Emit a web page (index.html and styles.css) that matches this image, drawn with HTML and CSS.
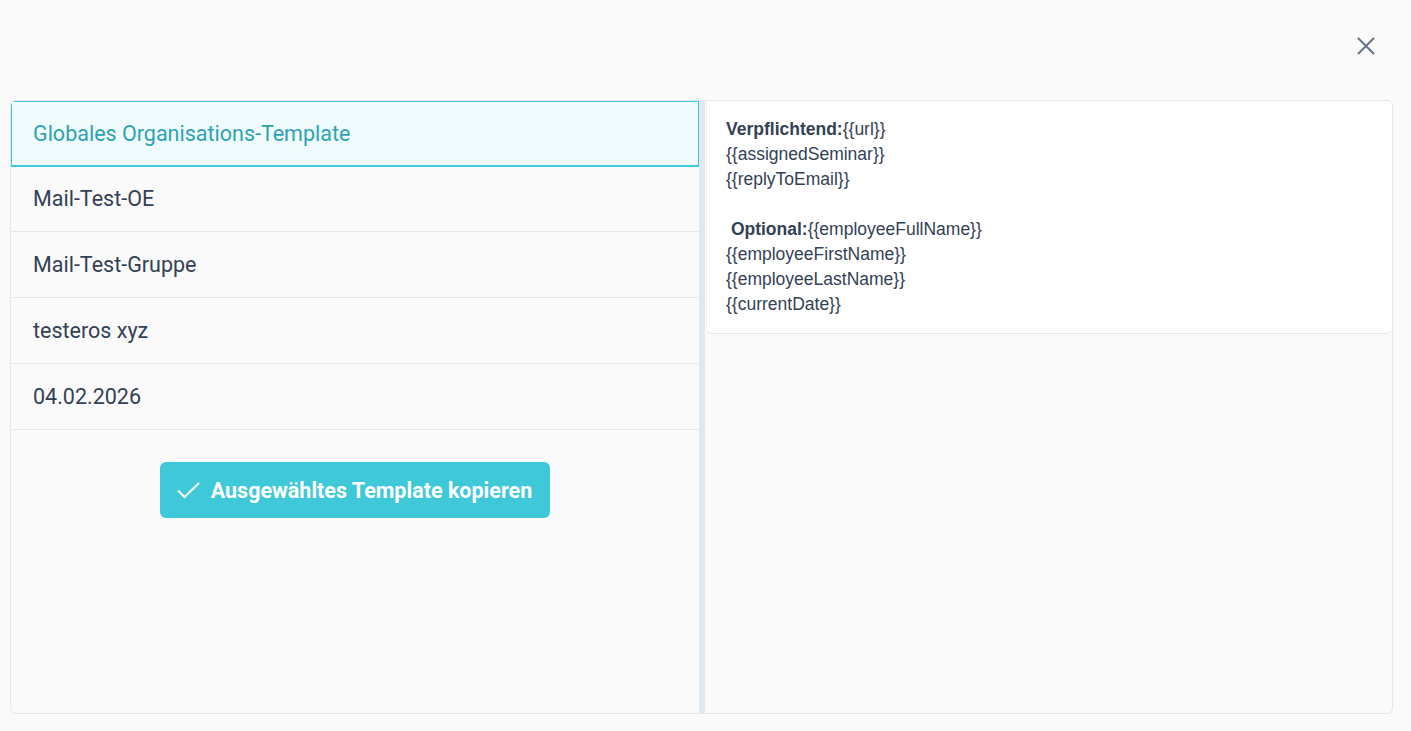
FILE: index.html
```html
<!DOCTYPE html>
<html lang="de">
<head>
<meta charset="utf-8">
<title>Template kopieren</title>
<link rel="stylesheet" href="styles.css">
</head>
<body>
<div class="dialog">
  <div class="header">
    <button class="close" aria-label="Schließen">
      <svg width="20" height="20" viewBox="0 0 20 20"><path d="M2 2 L18 18 M18 2 L2 18" stroke="#64748b" stroke-width="2" fill="none"/></svg>
    </button>
  </div>
  <div class="panel">
    <div class="left">
      <ul class="list">
        <li class="item selected">Globales Organisations-Template</li>
        <li class="item">Mail-Test-OE</li>
        <li class="item">Mail-Test-Gruppe</li>
        <li class="item">testeros xyz</li>
        <li class="item">04.02.2026</li>
      </ul>
      <div class="actions">
        <button class="copy">
          <svg width="25" height="24" viewBox="0 0 25 24"><path d="M2 12.5 L8.5 19 L23 5" stroke="#ffffff" stroke-width="2" fill="none"/></svg>
          <span>Ausgewähltes Template kopieren</span>
        </button>
      </div>
    </div>
    <div class="divider"></div>
    <div class="right">
      <div class="card">
        <b>Verpflichtend:</b>{{url}}<br>
        {{assignedSeminar}}<br>
        {{replyToEmail}}<br>
        <br>
        &nbsp;<b>Optional:</b>{{employeeFullName}}<br>
        {{employeeFirstName}}<br>
        {{employeeLastName}}<br>
        {{currentDate}}
      </div>
    </div>
  </div>
</div>
</body>
</html>
```

FILE: styles.css
```css
html, body {
  margin: 0;
  padding: 0;
  background: #fafafa;
  height: 100%;
}
body {
  font-family: Roboto, "Liberation Sans", Arial, sans-serif;
  color: #334155;
}
.dialog {
  display: flex;
  flex-direction: column;
  padding: 0 18px 17px 10px;
  height: 731px;
  box-sizing: border-box;
}
.header {
  height: 100px;
  display: flex;
  justify-content: flex-end;
  align-items: flex-start;
}
.close {
  margin-top: 36px;
  margin-right: 17px;
  background: none;
  border: 0;
  padding: 0;
  width: 20px;
  height: 20px;
  cursor: pointer;
}
.panel {
  flex: 1;
  display: grid;
  grid-template-columns: 688px 6px 1fr;
  border: 1px solid #e2e8f0;
  border-radius: 6px;
  overflow: hidden;
  background: #fafafa;
}
.left {
  display: flex;
  flex-direction: column;
}
.list {
  list-style: none;
  margin: 0;
  padding: 0;
}
.item {
  height: 65px;
  border-bottom: 1px solid #e5e7eb;
  display: flex;
  align-items: center;
  padding-left: 22px;
  font-size: 21.5px;
  color: #334155;
}
.item.selected {
  background: #f0fbfd;
  color: #2ea3b2;
  box-shadow: inset 0 0 0 1px #3ec8d8;
  border-bottom-color: #3ec8d8;
  margin-bottom: -1px;
  position: relative;
  z-index: 1;
}
.actions {
  display: flex;
  justify-content: center;
  padding-top: 32px;
}
.copy {
  display: flex;
  align-items: center;
  gap: 10px;
  height: 56px;
  padding: 0 18px 0 16px;
  background: #3ec8d8;
  border: 0;
  border-radius: 6px;
  color: #ffffff;
  font-family: Roboto, "Liberation Sans", Arial, sans-serif;
  font-size: 21.5px;
  font-weight: 700;
  cursor: pointer;
}
.divider {
  background: #e2e8f0;
}
.right {
  padding-left: 1px;
}
.card {
  background: #ffffff;
  border-bottom: 1px solid #e2e8f0;
  border-left: 1px solid #eef1f5;
  border-radius: 0 0 6px 6px;
  padding: 16px 20px 16px 19px;
  font-family: "Liberation Sans", Arial, sans-serif;
  font-size: 17.5px;
  line-height: 25px;
  color: #334155;
}
.card b {
  font-weight: 700;
}
```
